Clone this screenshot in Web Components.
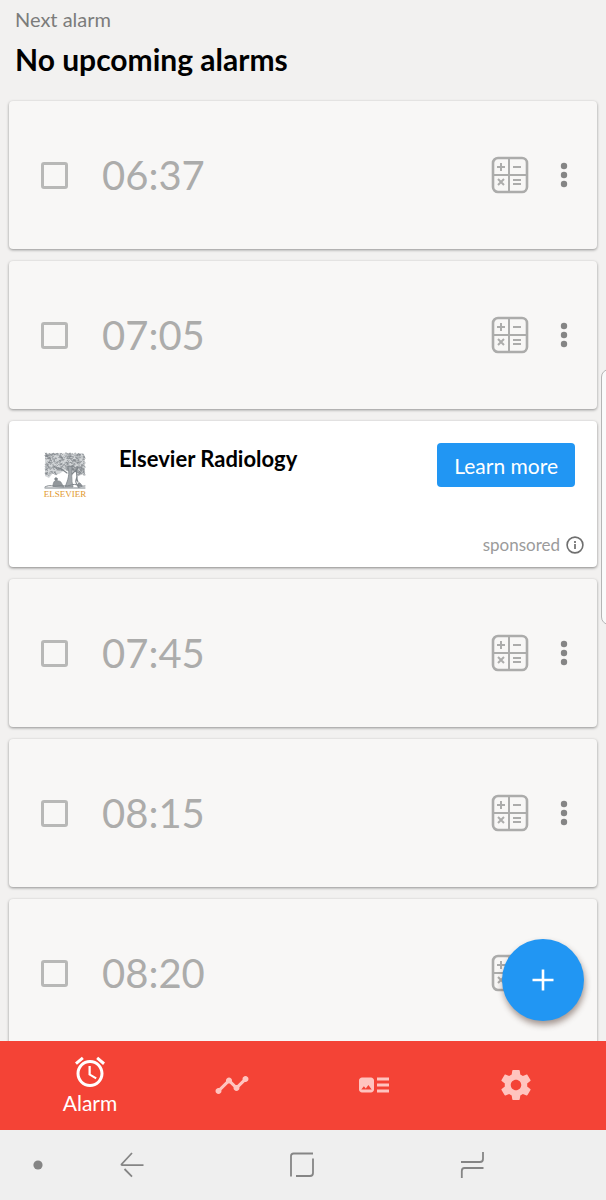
<!DOCTYPE html>
<html lang="en">
<head>
<meta charset="utf-8">
<meta name="viewport" content="width=device-width, initial-scale=1">
<title>Alarms</title>
<style>
  body {
    margin: 0;
    background: #f2f1f0;
    font-family: Lato, "Open Sans", sans-serif;
    --blue: #2196f3;
    --red: #f44336;
    --muted: #acacab;
  }
</style>
</head>
<body>
<alarm-app>
  <alarm-header slot="header">
    <span slot="label">Next alarm</span>
    <span slot="title">No upcoming alarms</span>
  </alarm-header>
  <alarm-card time="06:37"></alarm-card>
  <alarm-card time="07:05"></alarm-card>
  <sponsored-card>
    <publisher-logo slot="logo"></publisher-logo>
    <span slot="title">Elsevier Radiology</span>
    <span slot="action">Learn more</span>
  </sponsored-card>
  <alarm-card time="07:45"></alarm-card>
  <alarm-card time="08:15"></alarm-card>
  <alarm-card time="08:20"></alarm-card>
  <add-button slot="fab"></add-button>
  <tab-bar slot="tabs">
    <tab-item icon="alarm" name="Alarm" active>Alarm</tab-item>
    <tab-item icon="timeline" name="Statistics"></tab-item>
    <tab-item icon="news" name="News"></tab-item>
    <tab-item icon="settings" name="Settings"></tab-item>
  </tab-bar>
  <system-bar slot="system"></system-bar>
</alarm-app>

<script>
class AlarmApp extends HTMLElement {
  constructor() {
    super();
    this.attachShadow({ mode: "open" }).innerHTML = `
      <style>
        :host {
          display: flex;
          flex-direction: column;
          height: 100vh;
          overflow: hidden;
          position: relative;
        }
        main {
          flex: 1;
          min-height: 0;
          position: relative;
          overflow: hidden;
        }
        .list {
          display: flex;
          flex-direction: column;
          gap: 12px;
          padding: 0 9px;
        }
        .fab {
          position: absolute;
          right: 22px;
          bottom: 20px;
        }
        /* edge panel handle peeking in from the right */
        .handle {
          position: absolute;
          right: -13px;
          top: 369px;
          width: 16px;
          height: 254px;
          border: 1px solid #b5b5b5;
          border-radius: 8px;
          background: #fafafa;
        }
      </style>
      <main>
        <slot name="header"></slot>
        <div class="list"><slot></slot></div>
        <div class="fab"><slot name="fab"></slot></div>
      </main>
      <slot name="tabs"></slot>
      <slot name="system"></slot>
      <div class="handle"></div>
    `;
  }
}
customElements.define("alarm-app", AlarmApp);


class AlarmHeader extends HTMLElement {
  constructor() {
    super();
    this.attachShadow({ mode: "open" }).innerHTML = `
      <style>
        :host {
          display: block;
          padding: 7px 15px 22px;
        }
        p, h1 { margin: 0; }
        p {
          font-size: 20px;
          line-height: 24px;
          color: #7c7c7b;
        }
        h1 {
          font-size: 30px;
          line-height: 40px;
          margin-top: 8px;
          font-weight: 700;
          color: #000;
        }
      </style>
      <p><slot name="label"></slot></p>
      <h1><slot name="title"></slot></h1>
    `;
  }
}
customElements.define("alarm-header", AlarmHeader);


class AlarmCard extends HTMLElement {
  constructor() {
    super();
    this.attachShadow({ mode: "open" });
  }

  connectedCallback() {
    this.render();
  }

  render() {
    const time = this.getAttribute("time");
    this.shadowRoot.innerHTML = `
      <style>
        :host {
          display: flex;
          align-items: center;
          flex-shrink: 0;
          box-sizing: border-box;
          height: 148px;
          padding: 0 20px 0 32px;
          border-radius: 4px;
          background: #f8f7f6;
          box-shadow: 0 1px 3px rgba(0, 0, 0, .4);
        }
        input {
          appearance: none;
          box-sizing: border-box;
          width: 27px;
          height: 27px;
          margin: 0;
          border: 3px solid #b8b8b7;
          border-radius: 3px;
        }
        input:checked { background: var(--blue); }
        label {
          flex: 1;
          padding-left: 34px;
          font-size: 40px;
          line-height: 52px;
          color: var(--muted);
        }
        button {
          display: block;
          padding: 0;
          border: 0;
          background: none;
          cursor: pointer;
        }
        svg { display: block; }
        .menu { margin-left: 22px; }
      </style>
      <input type="checkbox" id="on">
      <label for="on">${time}</label>
      <button aria-label="Math task">
        <svg width="38" height="38" viewBox="0 0 38 38" fill="none" stroke="#acacab">
          <rect x="2" y="2" width="34" height="34" rx="5" stroke-width="2.6"/>
          <path d="M18 2v34M2 19h34" stroke-width="2"/>
          <path d="M6 11h8M10 7v8M22 11h8M7 23l6 6M13 23l-6 6M22 24h8M22 28h8" stroke-width="2"/>
        </svg>
      </button>
      <button class="menu" aria-label="More options">
        <svg width="26" height="38" viewBox="0 0 26 38" fill="#858585">
          <circle cx="13" cy="10" r="3.2"/>
          <circle cx="13" cy="19" r="3.2"/>
          <circle cx="13" cy="28" r="3.2"/>
        </svg>
      </button>
    `;
  }
}
customElements.define("alarm-card", AlarmCard);


class PublisherLogo extends HTMLElement {
  constructor() {
    super();
    this.attachShadow({ mode: "open" }).innerHTML = `
      <style>
        :host {
          display: block;
          text-align: center;
        }
        svg { display: block; margin: 0 auto; }
        span {
          display: block;
          font: 9px/11px "Liberation Serif", serif;
          color: #df982d;
        }
      </style>
      <svg width="42" height="37" viewBox="0 0 42 37" fill="none" stroke="#7f858a" stroke-linecap="round">
        <path d="M1 3l3-2 5 1 5-1 6 1 6-1 6 1 7-1 2 3-1 5 1 8-1 6-5-1-4-2-4 1-6-3-6 4-6-1-4 5-4-2z" fill="#d3d6d8" stroke="none"/>
        <path class="leaves" stroke-width=".6"/>
        <path d="M24 15c2 7 0 13-3 20h8c-2-7-1-14-1-20z" fill="#a3a8ac" stroke-width=".8"/>
        <path d="M34 15c-4 5 1 8-2 13-1 3 1 5 3 7M32 18c3 4-1 8 2 12M23 21l-7-5M28 22l6-6" stroke-width="1.2"/>
        <path d="M9 34c0-5 3-7 5-5 4 0 3 3 6 6zM34 35c-1-5 2-6 4-1z" fill="#92979b" stroke-width=".8"/>
        <circle cx="12" cy="27" r="1.2" fill="#7f858a"/>
        <path d="M1 35c5-3 8 0 13-1s8 1 13-1 8 2 14 1M1 36h40" stroke-width="1"/>
      </svg>
      <span>ELSEVIER</span>
    `;
    this.shadowRoot.querySelector(".leaves").setAttribute("d", this.leaves());
  }

  // short curls scattered over the crown of the tree
  leaves() {
    let d = "";
    let seed = 7;
    const rand = () => (seed = (seed * 16807) % 2147483647) / 2147483647;
    for (let i = 0; i < 360; i++) {
      const x = 1 + rand() * 39;
      const y = 1 + rand() * 22;
      // below the crown only the left side and the right edge carry leaves
      if (y > 18 && x > 12 && x < 30) continue;
      d += rand() > .5 ? `M${x} ${y}q1-1.6 1.4.6` : `M${x} ${y}q.4 1.8 1.5.2`;
    }
    return d;
  }
}
customElements.define("publisher-logo", PublisherLogo);


class SponsoredCard extends HTMLElement {
  constructor() {
    super();
    this.attachShadow({ mode: "open" }).innerHTML = `
      <style>
        :host {
          display: flex;
          flex-direction: column;
          justify-content: space-between;
          flex-shrink: 0;
          box-sizing: border-box;
          height: 146px;
          padding: 22px 13px 10px 34px;
          border-radius: 4px;
          background: #fff;
          box-shadow: 0 1px 3px rgba(0, 0, 0, .45);
        }
        .top {
          display: flex;
          align-items: flex-start;
        }
        .logo {
          width: 44px;
          padding-top: 9px;
        }
        h2 {
          flex: 1;
          margin: 0;
          padding-left: 32px;
          font-size: 22px;
          line-height: 32px;
          font-weight: 700;
          color: #000;
        }
        button {
          height: 44px;
          margin-right: 9px;
          padding: 0 17px;
          border: 0;
          border-radius: 4px;
          background: var(--blue);
          color: #fff;
          font-family: inherit;
          font-size: 21px;
          cursor: pointer;
        }
        .note {
          display: flex;
          align-items: center;
          justify-content: flex-end;
          gap: 6px;
          font-size: 17px;
          line-height: 24px;
          color: #9b9b9b;
        }
        svg { display: block; }
      </style>
      <div class="top">
        <div class="logo"><slot name="logo"></slot></div>
        <h2><slot name="title"></slot></h2>
        <button><slot name="action"></slot></button>
      </div>
      <div class="note">
        <span>sponsored</span>
        <svg width="18" height="18" viewBox="0 0 18 18" fill="none" stroke="#6f6f6f">
          <circle cx="9" cy="9" r="7.9" stroke-width="1.6"/>
          <path d="M9 8v5M9 5v2" stroke-width="1.7"/>
        </svg>
      </div>
    `;
  }
}
customElements.define("sponsored-card", SponsoredCard);


class AddButton extends HTMLElement {
  constructor() {
    super();
    this.attachShadow({ mode: "open" }).innerHTML = `
      <style>
        :host { display: block; }
        button {
          display: grid;
          place-items: center;
          width: 82px;
          height: 82px;
          padding: 0;
          border: 0;
          border-radius: 50%;
          background: var(--blue);
          box-shadow: 1px 4px 6px rgba(60, 30, 20, .45);
          cursor: pointer;
        }
      </style>
      <button aria-label="Add alarm">
        <svg width="22" height="22" viewBox="0 0 22 22" stroke="#fff" stroke-width="2.6">
          <path d="M11 .5v21M.5 11h21"/>
        </svg>
      </button>
    `;
  }
}
customElements.define("add-button", AddButton);


class TabBar extends HTMLElement {
  constructor() {
    super();
    this.attachShadow({ mode: "open" }).innerHTML = `
      <style>
        :host {
          display: block;
          position: relative;
          background: var(--red);
        }
        nav {
          box-sizing: border-box;
          display: grid;
          grid-template-columns: repeat(4, 1fr);
          height: 89px;
          padding: 0 19px 2px;
        }
      </style>
      <nav><slot></slot></nav>
    `;
  }
}
customElements.define("tab-bar", TabBar);


const TAB_ICONS = {
  alarm: "M22 5.72l-4.6-3.86-1.29 1.53 4.6 3.86L22 5.72zM7.88 3.39L6.6 1.86 2 5.71l1.29 1.53 4.59-3.85zM12.5 8H11v6l4.75 2.85.75-1.23-4-2.37V8zM12 4c-4.97 0-9 4.03-9 9s4.02 9 9 9c4.97 0 9-4.03 9-9s-4.03-9-9-9zm0 16c-3.87 0-7-3.13-7-7s3.13-7 7-7 7 3.13 7 7-3.13 7-7 7z",
  timeline: "M23 8c0 1.1-.9 2-2 2-.18 0-.35-.02-.51-.07l-3.56 3.55c.05.16.07.34.07.52 0 1.1-.9 2-2 2s-2-.9-2-2c0-.18.02-.36.07-.52l-2.55-2.55c-.16.05-.34.07-.52.07s-.36-.02-.52-.07l-4.55 4.56c.05.16.07.33.07.51 0 1.1-.9 2-2 2s-2-.9-2-2 .9-2 2-2c.18 0 .35.02.51.07l4.56-4.55C8.02 9.36 8 9.18 8 9c0-1.1.9-2 2-2s2 .9 2 2c0 .18-.02.36-.07.52l2.55 2.55c.16-.05.34-.07.52-.07s.36.02.52.07l3.55-3.56C19.02 8.35 19 8.18 19 8c0-1.1.9-2 2-2s2 .9 2 2z",
  news: "M22 13h-8v-2h8v2zm0-6h-8v2h8V7zm-8 10h8v-2h-8v2zm-2-8v6c0 1.1-.9 2-2 2H4c-1.1 0-2-.9-2-2V9c0-1.1.9-2 2-2h6c1.1 0 2 .9 2 2zm-1.5 6l-2.25-3-1.75 2.26-1.25-1.51L3.5 15h7z",
  settings: "M19.43 12.98c.04-.32.07-.64.07-.98s-.03-.66-.07-.98l2.11-1.65c.19-.15.24-.42.12-.64l-2-3.46c-.12-.22-.39-.3-.61-.22l-2.49 1c-.52-.4-1.08-.73-1.69-.98l-.38-2.65C14.46 2.18 14.25 2 14 2h-4c-.25 0-.46.18-.49.42l-.38 2.65c-.61.25-1.17.59-1.69.98l-2.49-1c-.23-.09-.49 0-.61.22l-2 3.46c-.13.22-.07.49.12.64l2.11 1.65c-.04.32-.07.65-.07.98s.03.66.07.98l-2.11 1.65c-.19.15-.24.42-.12.64l2 3.46c.12.22.39.3.61.22l2.49-1c.52.4 1.08.73 1.69.98l.38 2.65c.03.24.24.42.49.42h4c.25 0 .46-.18.49-.42l.38-2.65c.61-.25 1.17-.59 1.69-.98l2.49 1c.23.09.49 0 .61-.22l2-3.46c.12-.22.07-.49-.12-.64l-2.11-1.65zM12 15.5c-1.93 0-3.5-1.57-3.5-3.5s1.57-3.5 3.5-3.5 3.5 1.57 3.5 3.5-1.57 3.5-3.5 3.5z"
};

class TabItem extends HTMLElement {
  constructor() {
    super();
    this.attachShadow({ mode: "open" });
  }

  connectedCallback() {
    this.render();
  }

  render() {
    const active = this.hasAttribute("active");
    this.shadowRoot.innerHTML = `
      <style>
        :host { display: grid; }
        a {
          display: flex;
          flex-direction: column;
          align-items: center;
          justify-content: center;
          color: #ffc4bf;
          font-size: 21px;
          line-height: 26px;
          text-decoration: none;
        }
        a.active { color: #fff; }
        svg { display: block; }
      </style>
      <a href="#${this.getAttribute("icon")}" class="${active ? "active" : ""}" aria-label="${this.getAttribute("name")}">
        <svg width="36" height="36" viewBox="0 0 24 24" fill="currentColor">
          <path d="${TAB_ICONS[this.getAttribute("icon")]}"/>
        </svg>
        <slot></slot>
      </a>
    `;
  }
}
customElements.define("tab-item", TabItem);


class SystemBar extends HTMLElement {
  constructor() {
    super();
    this.attachShadow({ mode: "open" }).innerHTML = `
      <style>
        :host {
          display: grid;
          grid-template-columns: 47px repeat(3, 1fr);
          align-items: center;
          justify-items: center;
          position: relative;
          height: 70px;
          padding-right: 49px;
          background: #efefef;
        }
        button {
          display: block;
          padding: 0;
          border: 0;
          background: none;
          cursor: pointer;
        }
        .dot { justify-self: end; margin-right: 4px; }
        svg {
          display: block;
          fill: none;
          stroke: #858585;
          stroke-width: 1.8;
        }
        .dot svg {
          fill: #858585;
          stroke: none;
        }
      </style>
      <button class="dot" aria-label="Hide bar">
        <svg width="10" height="26" viewBox="0 0 10 26"><circle cx="5" cy="13" r="4.6"/></svg>
      </button>
      <button aria-label="Back">
        <svg width="26" height="26" viewBox="0 0 26 26"><path d="M13 1L2.6 12.2q-.6.9.6.9H24.5M5.500 17l7.5 7.6"/></svg>
      </button>
      <button aria-label="Home">
        <svg width="26" height="26" viewBox="0 0 26 26"><path d="M2 24.5V4q0-2.5 2.5-2.5H24M7 24h14q3 0 3-3V6.5"/></svg>
      </button>
      <button aria-label="Recent apps">
        <svg width="26" height="26" viewBox="0 0 26 26"><path d="M2 10h19q3 0 3-3V0M24.5 16h-19q-2.7 0-2.7 3v7"/></svg>
      </button>
    `;
  }
}
customElements.define("system-bar", SystemBar);
</script>
</body>
</html>
